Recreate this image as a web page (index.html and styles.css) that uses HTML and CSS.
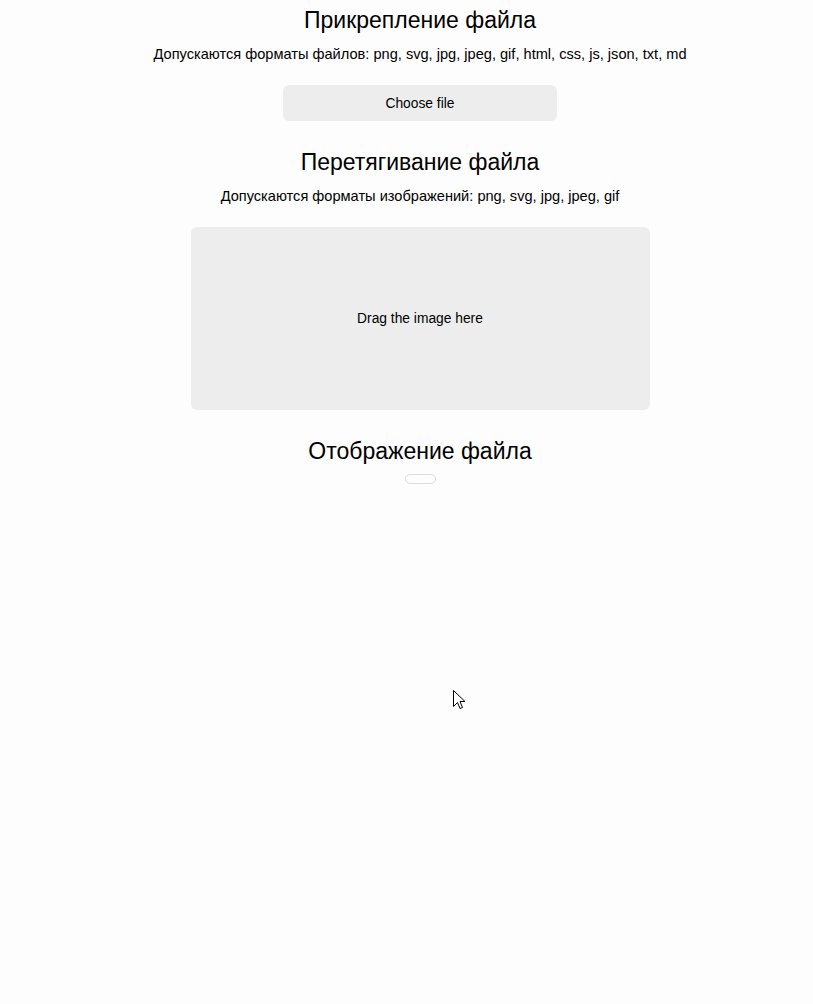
FILE: index.html
```html
<!DOCTYPE html>
<html lang="ru">
<head>
<meta charset="utf-8">
<title>Файлы</title>
<link rel="stylesheet" href="styles.css">
</head>
<body>
<main class="page">
  <section class="block">
    <h2 class="title">Прикрепление файла</h2>
    <p class="hint">Допускаются форматы файлов: png, svg, jpg, jpeg, gif, html, css, js, json, txt, md</p>
    <label class="choose">Choose file</label>
  </section>
  <section class="block">
    <h2 class="title">Перетягивание файла</h2>
    <p class="hint">Допускаются форматы изображений: png, svg, jpg, jpeg, gif</p>
    <div class="drop">Drag the image here</div>
  </section>
  <section class="block">
    <h2 class="title">Отображение файла</h2>
    <div class="preview"></div>
  </section>
</main>
<svg class="cursor" width="13" height="21" viewBox="0 0 13 21"><path d="M0.5 0.5 L0.5 16.5 L4.5 12.5 L7 18.5 L9.5 17.5 L7 11.5 L12 11.5 Z" fill="#fff" stroke="#000" stroke-width="1"/></svg>
</body>
</html>
```
FILE: styles.css
```css
html, body {
  margin: 0;
  background: #fdfdfd;
}
body {
  font-family: "Liberation Sans", Arial, sans-serif;
  color: #000;
  padding-left: 27px;
  min-height: 1004px;
  box-sizing: border-box;
  position: relative;
}
.page {
  display: flex;
  flex-direction: column;
  align-items: center;
  padding-top: 6px;
}
.block {
  display: flex;
  flex-direction: column;
  align-items: center;
}
.title {
  font-size: 23px;
  font-weight: normal;
  margin: 0;
  line-height: 28px;
}
.hint {
  font-size: 14.6px;
  margin: 11px 0 0;
  line-height: 18px;
}
.choose {
  margin-top: 22px;
  width: 274px;
  height: 36px;
  background: #ededed;
  border-radius: 6px;
  display: flex;
  align-items: center;
  justify-content: center;
  font-size: 13.8px;
  margin-bottom: 27px;
}
.drop {
  margin-top: 22px;
  width: 459px;
  height: 183px;
  background: #ededed;
  border-radius: 6px;
  display: flex;
  align-items: center;
  justify-content: center;
  font-size: 13.8px;
  margin-bottom: 27px;
}
.preview {
  margin-top: 9px;
  width: 29px;
  height: 8px;
  border: 1px solid #dcdcdc;
  border-radius: 5px;
}
.cursor {
  position: absolute;
  left: 453px;
  top: 690px;
}
```
